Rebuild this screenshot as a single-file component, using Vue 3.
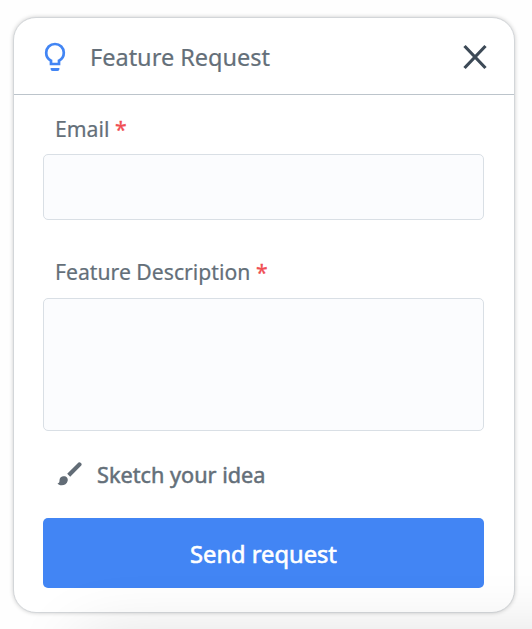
<script setup>
import { ref } from 'vue'

const email = ref('')
const description = ref('')
</script>

<template>
  <main class="page">
    <form class="card" @submit.prevent>
      <header class="header">
        <svg class="bulb" viewBox="0 0 22 30" aria-hidden="true">
          <path d="M7 22V18.7C4 17.2 2.2 14.3 2.2 10.8C2.2 5.8 6 2 11 2S19.8 5.8 19.8 10.8C19.8 14.3 18 17.2 15 18.7V22Z" fill="none" stroke="#4285f4" stroke-width="2.7" />
          <path d="M6.6 26.1H15.4V27C15.4 28.2 14.6 28.9 13.5 28.9H8.5C7.4 28.9 6.6 28.2 6.6 27Z" fill="#4285f4" />
        </svg>
        <h1 class="title">Feature Request</h1>
        <button class="close" type="button" aria-label="Close">
          <svg viewBox="0 0 24 26" aria-hidden="true">
            <path d="M1.5 2L22.5 24M22.5 2L1.5 24" stroke="#3d4a57" stroke-width="3.2" />
          </svg>
        </button>
      </header>
      <div class="body">
        <label class="label" for="email">Email <span class="required">*</span></label>
        <input id="email" v-model="email" class="field email" type="email" />
        <label class="label description-label" for="description">Feature Description <span class="required">*</span></label>
        <textarea id="description" v-model="description" class="field description"></textarea>
        <button class="sketch" type="button">
          <svg class="brush" viewBox="0 0 26 26" aria-hidden="true">
            <path d="M10.2 12.8L21.5 1.6Q22.6.8 23.6 1.7L24.2 2.3Q25.2 3.3 24.3 4.4L13.2 15.7Z" />
            <path d="M6 15.3C9 14.7 11.3 17 10.7 19.8C10.1 23 7 24.5 4.3 24.3C2.8 24.2 1.4 23.5.5 22.4C2.2 22.2 2.5 21.1 2.5 19.3C2.5 17 4 15.6 6 15.3Z" />
          </svg>
          <span class="sketch-text">Sketch your idea</span>
        </button>
        <button class="send" type="submit"><span class="send-text">Send request</span></button>
      </div>
    </form>
    <div class="haze"></div>
  </main>
</template>

<style>
body {
  background: #fefefe;
  overflow: hidden;
}
</style>

<style scoped>
.page {
  position: relative;
  box-sizing: border-box;
  height: 629px;
  padding: 17px 17px 16px 13px;
  overflow: hidden;
  font-family: "Noto Sans", sans-serif;
  color: #646f79;
}
.card {
  box-sizing: border-box;
  height: 596px;
  border: 1.5px solid #d3d6d9;
  border-radius: 23px;
  background: #fff;
  box-shadow: 0 0 4px rgba(0, 0, 0, 0.2);
}
.header {
  box-sizing: border-box;
  display: flex;
  align-items: center;
  height: 77px;
  padding: 2px 27px 0 30px;
  border-bottom: 1px solid #bcc4cb;
}
.bulb {
  width: 22px;
  height: 30px;
}
.title {
  flex: 1;
  margin: 0 0 0 24px;
  font-size: 23.5px;
  line-height: 32px;
  font-weight: 400;
  -webkit-text-stroke: 0.2px currentColor;
}
button {
  padding: 0;
  border: 0;
  background: none;
  font-family: inherit;
  color: inherit;
}
.close {
  width: 24px;
  height: 26px;
}
.close svg {
  display: block;
}
.body {
  display: flex;
  flex-direction: column;
  padding: 19px 29px 0;
}
.label {
  height: 40px;
  padding-left: 12px;
  font-size: 21.2px;
  line-height: 30px;
  -webkit-text-stroke: 0.2px currentColor;
}
.description-label {
  height: 41px;
}
.required {
  color: #f04e53;
  -webkit-text-stroke: 0.3px #f04e53;
}
.field {
  box-sizing: border-box;
  width: 441px;
  margin: 0;
  padding: 10px;
  border: 1px solid #d9dfe5;
  border-radius: 5px;
  background: #fbfcfe;
  resize: none;
  outline: none;
  font: inherit;
}
.email {
  height: 66px;
  margin-bottom: 37px;
}
.description {
  height: 133px;
}
.sketch {
  display: flex;
  align-items: center;
  height: 32px;
  margin: 27px 0 28px 14px;
  font-size: 21.7px;
}
.brush {
  width: 26px;
  height: 26px;
  margin-right: 14px;
  fill: #626c76;
}
.sketch-text {
  -webkit-text-stroke: 0.5px currentColor;
}
.send {
  width: 441px;
  height: 70px;
  padding-top: 2px;
  border-radius: 5px;
  background: #4285f4;
  color: #fff;
  font-size: 23.7px;
}
.send-text {
  -webkit-text-stroke: 0.6px currentColor;
}
.haze {
  position: absolute;
  left: 80px;
  right: -90px;
  top: 640px;
  height: 80px;
  box-shadow: 0 0 70px rgba(0, 0, 0, 0.14);
  pointer-events: none;
}
</style>
